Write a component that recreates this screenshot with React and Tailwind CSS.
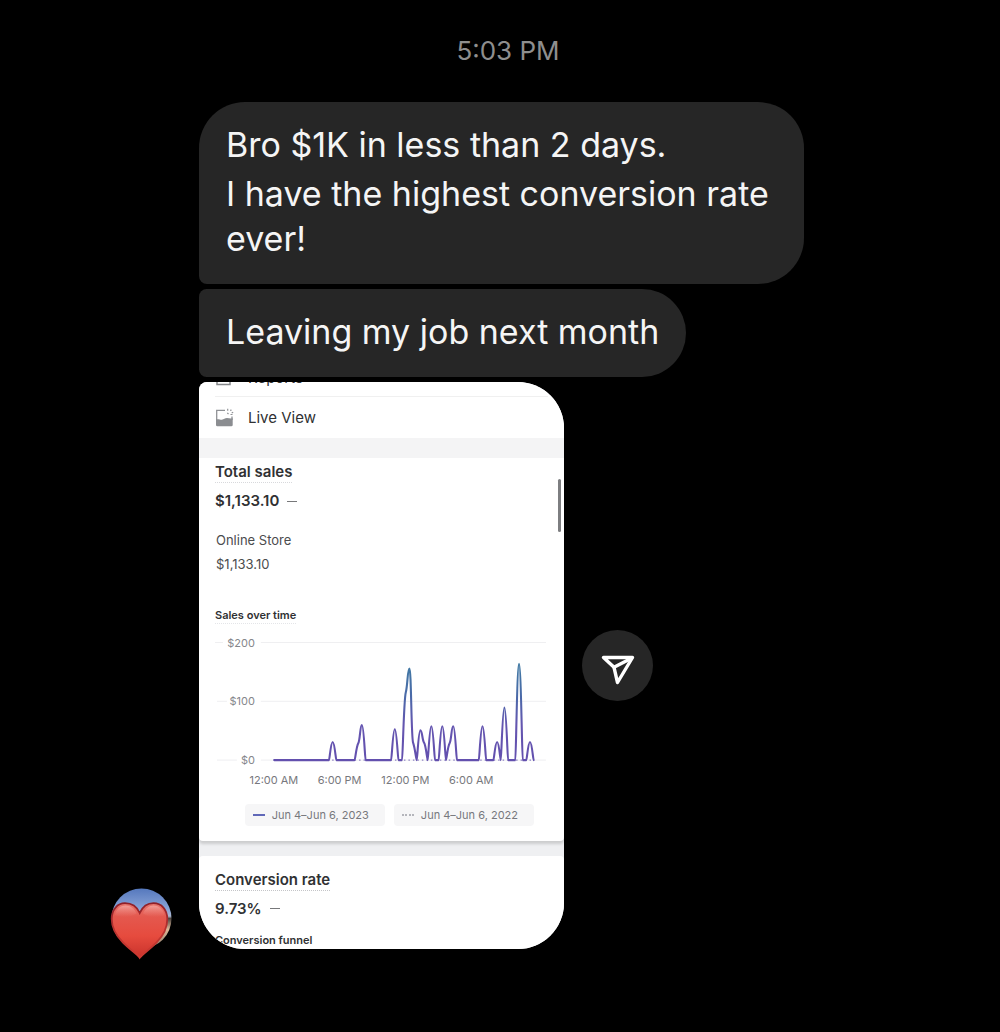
import React from 'react'

// sales per hour, keyed by the hour index, every other hour is 0
const sales = {
  16: 31, 23: 29, 24: 60, 33: 53, 36: 116, 37: 157, 38: 30, 40: 51, 41: 30, 43: 58,
  46: 58, 48: 29, 49: 58, 57: 58, 61: 31, 63: 90, 67: 165, 70: 31,
}
const HOURS = 72
const LEFT = 61.4
const STEP = 3.665
const ZERO = 124.5

function buildPath() {
  const y = Array.from({ length: HOURS }, (_, i) => ZERO - (sales[i] || 0) * 0.585)
  const slope = y.map((v, i) => {
    if (i === 0 || i === HOURS - 1) return 0
    const a = (v - y[i - 1]) / STEP
    const b = (y[i + 1] - v) / STEP
    return a * b <= 0 ? 0 : (0.7 * a * b) / (a + b)
  })
  // peaks are rounder than the feet
  const reach = y.map((v) => (v < ZERO ? STEP * 0.52 : STEP * 0.14))
  let d = `M${LEFT} ${y[0]}`
  for (let i = 1; i < HOURS; i++) {
    const x0 = LEFT + (i - 1) * STEP
    const x1 = LEFT + i * STEP
    const h0 = reach[i - 1]
    const h1 = reach[i]
    d += `C${x0 + h0} ${y[i - 1] + slope[i - 1] * h0} ${x1 - h1} ${y[i] - slope[i] * h1} ${x1} ${y[i]}`
  }
  return d
}

function SalesChart() {
  return (
    <svg viewBox="0 0 336 154" className="block w-full" role="img" aria-label="Sales over time">
      <defs>
        <linearGradient id="sales" gradientUnits="userSpaceOnUse" x1="0" y1="25" x2="0" y2="124">
          <stop offset="0" stopColor="#3f7ba3" />
          <stop offset="0.35" stopColor="#4a6aa8" />
          <stop offset="0.65" stopColor="#6455b0" />
          <stop offset="1" stopColor="#6350ae" />
        </linearGradient>
      </defs>
      <g stroke="#efeff1" strokeWidth="1">
        <path d="M2 6.5H10M48 6.5H334" />
        <path d="M4 65.5H14M48 65.5H334" />
        <path d="M4 124.5H24M48 124.5H334" />
      </g>
      <g fill="#85868b" fontSize="11" textAnchor="end">
        <text x="42" y="11">$200</text>
        <text x="42" y="69">$100</text>
        <text x="42" y="128">$0</text>
      </g>
      <path d="M61 124.500H321" stroke="#8f83c4" strokeWidth="1.4" strokeDasharray="1.5 3" />
      <path d={buildPath()} fill="none" stroke="url(#sales)" strokeWidth="2.1" strokeLinejoin="round" strokeLinecap="round" />
      <g fill="#77787d" fontSize="11" textAnchor="middle">
        <text x="61" y="148">12:00 AM</text>
        <text x="127" y="148">6:00 PM</text>
        <text x="193" y="148">12:00 PM</text>
        <text x="259" y="148">6:00 AM</text>
      </g>
    </svg>
  )
}

function ReportsIcon() {
  return (
    <svg width="20" height="20" viewBox="0 0 20 20" fill="none" stroke="#85878a" strokeWidth="1.5">
      <path d="M2 3.5h13v13H2z" />
    </svg>
  )
}

function LiveViewIcon() {
  return (
    <svg width="20" height="20" viewBox="0 0 20 20">
      <path d="M10 2.300H1.700V12M17 8.500V12" fill="none" stroke="#909296" strokeWidth="1.3" />
      <path d="M1 11.500c2.500-.8 3.600.2 5.800.2s3-1.600 5.200-1.600c1.800 0 3.400.6 5.700.2v6.600a1.400 1.400 0 0 1-1.400 1.400H2.400A1.400 1.400 0 0 1 1 16.900z" fill="#8b8d91" />
      <path d="M12.700.8v2M16.300 1.600l-.8 1.300M12.300 4.800l1.200 1.200M18.200 4.300l-1.500.6M15.500 6.500h2" fill="none" stroke="#909296" strokeWidth="1.2" />
    </svg>
  )
}

function HeartAvatar() {
  return (
    <svg width="62" height="72" viewBox="0 0 62 72" className="block" role="img" aria-label="Heart">
      <defs>
        <linearGradient id="sky" x1="0" y1="0" x2="0" y2="1">
          <stop offset="0" stopColor="#5578bd" />
          <stop offset="0.35" stopColor="#8aa5d8" />
          <stop offset="0.46" stopColor="#a9b6cf" />
          <stop offset="0.5" stopColor="#4d4540" />
          <stop offset="0.68" stopColor="#dcb898" />
          <stop offset="1" stopColor="#8d7868" />
        </linearGradient>
        <linearGradient id="heart" x1="0" y1="0" x2="0" y2="1">
          <stop offset="0" stopColor="#e8766e" />
          <stop offset="0.25" stopColor="#e4584e" />
          <stop offset="0.6" stopColor="#e64b3e" />
          <stop offset="1" stopColor="#c9322b" />
        </linearGradient>
        <linearGradient id="edge" x1="0" y1="0" x2="0" y2="1">
          <stop offset="0" stopColor="#8f2029" />
          <stop offset="0.5" stopColor="#b8322f" />
          <stop offset="1" stopColor="#cf3a31" />
        </linearGradient>
        <linearGradient id="shine" x1="0" y1="0" x2="0" y2="1">
          <stop offset="0" stopColor="#fbc4bf" stopOpacity="0.55" />
          <stop offset="1" stopColor="#f08b83" stopOpacity="0" />
        </linearGradient>
      </defs>
      <circle cx="31.500" cy="30.500" r="30" fill="url(#sky)" />
      <path
        d="M29.700 69.800C27.500 66.500 20 61.500 13 54.500C6 47.500 1.700 40.500 1.700 31C1.700 21.500 7.500 15.200 15 15.200C22 15.200 27 19 29.700 25C32.500 19 37.500 15.200 43.500 15.200C51.500 15.200 57.300 21.500 57.300 31C57.300 40.500 53.500 47.500 46.500 54.500C39.500 61.500 32 66.500 29.700 69.800Z"
        fill="url(#heart)"
        stroke="url(#edge)"
        strokeWidth="1.800"
      />
      <path d="M5 27C6 20.500 11 17.500 15.500 17.500C20.500 17.500 24.500 20.500 26.500 25.500C19 30 12 30 5 27Z" fill="url(#shine)" />
      <path d="M33 25.500C35 20.500 39 17.500 43.500 17.500C48 17.500 53 20.500 54.500 27C47 30 40 30 33 25.500Z" fill="url(#shine)" />
    </svg>
  )
}

function SendIcon() {
  return (
    <svg width="36" height="38" viewBox="0 0 36 38" fill="none" stroke="#fff" strokeWidth="3.400" strokeLinejoin="round" strokeLinecap="round">
      <path d="M3.500 10.500H32.500L17.500 35.500L14 20.300Z" />
      <path d="M14 20.300L31.500 11.200" />
    </svg>
  )
}

function Dash() {
  return <span className="h-px w-[10px] bg-[#77787a]" />
}

function Screenshot() {
  return (
    <div className="h-[567px] w-[365px] shrink-0 overflow-hidden rounded-[46px] rounded-tl-lg bg-[#eff0f2] text-[#303133]">
      <div className="bg-white px-4">
        <div className="-mt-[14px] flex h-[29px] items-start gap-3 border-b border-[#f0f0f0]">
          <ReportsIcon />
          <span className="pl-px text-[15px] leading-5">Reports</span>
        </div>
        <div className="flex h-[41px] items-center gap-3 pt-px">
          <LiveViewIcon />
          <span className="pl-px text-[15px] leading-5">Live View</span>
        </div>
      </div>
      <div className="h-5 bg-[#f4f4f5]"></div>

      <section className="relative rounded-b bg-white px-4 pt-1 pb-[15px] shadow-[0_3px_3px_#00000026]">
        <h2 className="w-fit border-b border-dotted border-[#d8d9dc] text-[15px] leading-5 font-semibold">Total sales</h2>
        <div className="mt-2 flex items-center gap-2 text-[15px] leading-5 font-semibold">$1,133.10 <Dash /></div>
        <div className="mt-[19px] space-y-1 pl-px text-[13px] leading-5 text-[#4b4c4e]">
          <p>Online Store</p>
          <p>$1,133.10</p>
        </div>
        <h3 className="mt-[33px] w-fit border-b border-dotted border-[#e4e5e8] text-[11px] leading-4 font-semibold">Sales over time</h3>
        <div className="mt-3 -ml-[2px]">
          <SalesChart />
        </div>
        <div className="mt-[14px] flex justify-end gap-[9px] pr-[14px] text-[11px] leading-[22px] text-[#77787d]">
          <span className="flex items-center gap-[7px] rounded-sm bg-[#f6f6f7] pr-4 pl-2">
            <span className="h-[2px] w-3 bg-[#6068b8]" />Jun 4–Jun 6, 2023
          </span>
          <span className="flex items-center gap-[7px] rounded-sm bg-[#f6f6f7] pr-4 pl-2">
            <span className="w-3 border-t-2 border-dotted border-[#b4b5bb]" />Jun 4–Jun 6, 2022
          </span>
        </div>
        <span className="absolute top-[21px] right-[3px] h-[53px] w-[3px] rounded-full bg-[#7d7e80]" />
      </section>

      <section className="mt-[15px] rounded-t bg-white px-4 pt-[14px] pb-4">
        <h2 className="w-fit border-b border-dotted border-[#c4c5c8] text-[15px] leading-5 font-semibold">Conversion rate</h2>
        <div className="mt-2 flex items-center gap-2 text-[15px] leading-5 font-semibold">9.73% <Dash /></div>
        <h3 className="mt-[13px] text-[11px] leading-4 font-semibold">Conversion funnel</h3>
      </section>
    </div>
  )
}

function App() {
  return (
    <main className="min-h-screen bg-black pt-[35px] pb-8 font-[Inter,sans-serif] text-[#f5f5f5]">
      <p className="pl-4 text-center text-[26px] leading-8 text-[#8e8e8e]">5:03 PM</p>

      <div className="mt-[35px] flex flex-col items-start gap-[5px] pl-[199px] text-[34px] leading-[45px]">
        <div className="max-w-[605px] rounded-[46px] rounded-bl-lg bg-[#262626] px-[27px] pt-5 pb-[23px]">
          <p>Bro $1K in less than 2 days.</p>
          <p className="mt-1">I have the highest conversion rate ever!</p>
        </div>
        <div className="rounded-r-[46px] rounded-l-lg bg-[#262626] px-[27px] pt-5 pb-[23px]">Leaving my job next month</div>
      </div>

      <div className="mt-[5px] flex items-end gap-[27px] pl-[110px]">
        <div className="-mb-[11px]">
          <HeartAvatar />
        </div>
        <div className="flex items-center gap-[18px]">
          <Screenshot />
          <button aria-label="Share" className="flex size-[71px] items-center justify-center rounded-full bg-[#262626]">
            <SendIcon />
          </button>
        </div>
      </div>
    </main>
  )
}

export default App
